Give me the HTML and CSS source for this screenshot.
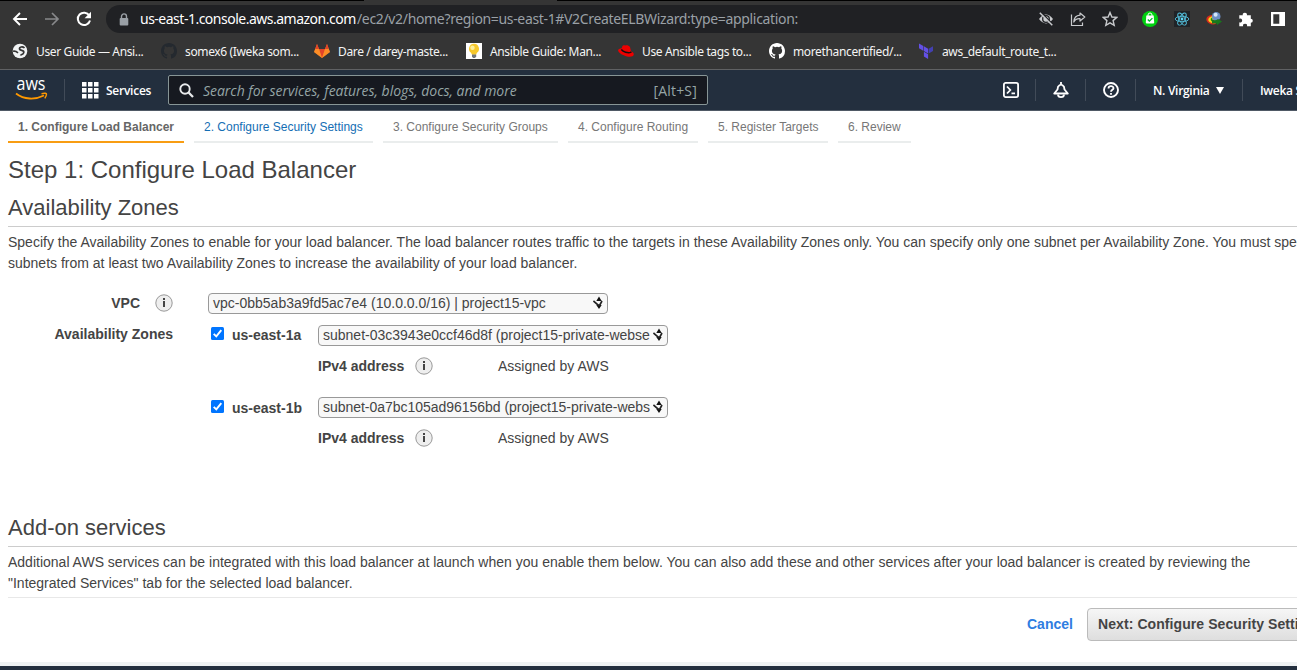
FILE: index.html
```
<!DOCTYPE html>
<html lang="en">
<head>
<meta charset="utf-8">
<title>Create Load Balancer</title>
<link rel="stylesheet" href="styles.css">
</head>
<body>
<div class="window">
  <header class="browser">
    <div class="tabstrip"><span class="active-tab"></span></div>
    <div class="toolbar">
      <svg class="ic nav-back" width="16" height="16" viewBox="0 0 16 16"><path d="M15 8H2M8 2L2 8l6 6" fill="none" stroke="#fff" stroke-width="1.9"/></svg>
      <svg class="ic nav-fwd" width="16" height="16" viewBox="0 0 16 16"><path d="M1 8h13M8 2l6 6-6 6" fill="none" stroke="#88898b" stroke-width="1.7"/></svg>
      <svg class="ic nav-reload" width="16" height="16" viewBox="0 0 16 16"><path d="M13.3 4.6A6.2 6.2 0 1 0 14 9.5" fill="none" stroke="#fff" stroke-width="2"/><path d="M15 .8v6.4H8.6z" fill="#fff"/></svg>
      <div class="omnibox">
        <svg class="lock" width="10" height="13" viewBox="0 0 10 13"><path d="M2.5 6V3.400a2.500 2.500 0 0 1 5 0V6" fill="none" stroke="#9aa0a6" stroke-width="1.4"/><rect x=".7" y="5" width="8.6" height="7.6" rx="1" fill="#9aa0a6"/></svg>
        <span class="url"><b>us-east-1.console.aws.amazon.com</b><i>/ec2/v2/home?region=us-east-1#V2CreateELBWizard:type=application:</i></span>
        <svg class="oi" width="16" height="16" viewBox="0 0 16 16"><path d="M1 8Q8-.8 15 8 8 16.800 1 8z" fill="#c8cacd"/><circle cx="8" cy="8" r="3.3" fill="none" stroke="#202124" stroke-width="1.3"/><path d="M3 1l12 12.800" stroke="#202124" stroke-width="1.600"/><path d="M1.800 1.800l12.500 12.500" stroke="#c8cacd" stroke-width="1.500"/></svg>
        <svg class="oi" width="16" height="16" viewBox="0 0 16 16"><path d="M1.500 3.500v11h11v-3" fill="none" stroke="#c8cacd" stroke-width="1.200"/><path d="M10 2l4.800 4-4.800 4V7.700C7 7.500 5 8.500 3.800 11 4 7 6 4.500 10 4.200z" fill="none" stroke="#c8cacd" stroke-width="1.200" stroke-linejoin="round"/></svg>
        <svg class="oi" width="16" height="16" viewBox="0 0 16 16"><path d="M8 1.500l1.900 4.500 4.900.4-3.700 3.200 1.100 4.800L8 11.900l-4.200 2.500 1.100-4.800L1.200 6.400 6.100 6z" fill="none" stroke="#c8cacd" stroke-width="1.400"/></svg>
      </div>
      <div class="extensions">
        <svg width="16" height="16" viewBox="0 0 16 16"><circle cx="8" cy="8" r="8" fill="#00d010"/><path d="M6 5V4a2 2 0 0 1 4 0v1" fill="none" stroke="#fff"/><path d="M4.300 4.500h7.400l.5 7a1 1 0 0 1-1 1H4.800a1 1 0 0 1-1-1z" fill="#fff"/><path d="M5.800 8.500l1.600 1.600 3-3" fill="none" stroke="#00b82b" stroke-width="1.300"/></svg>
        <svg width="16" height="16" viewBox="0 0 16 16"><rect width="16" height="16" fill="#202327"/><g fill="none" stroke="#53c1de" stroke-width=".9"><ellipse cx="8" cy="8" rx="6.800" ry="2.700"/><ellipse cx="8" cy="8" rx="6.800" ry="2.700" transform="rotate(60 8 8)"/><ellipse cx="8" cy="8" rx="6.800" ry="2.700" transform="rotate(120 8 8)"/></g><circle cx="8" cy="8" r="1.400" fill="#61dafb"/></svg>
        <svg width="16" height="16" viewBox="0 0 16 16"><path d="M6 4C1 4.500-.5 7.500.8 10c1.500 3 5.500 4 9.200 3z" fill="#d92b1c"/><path d="M7 5C3.500 5.500 1.700 7.500 2.500 9.800 3.500 12 7 12.800 10 12z" fill="#f5d51b"/><path d="M6.500 6.500C4.500 7 4 9 6 10.500z" fill="#18851c"/><circle cx="10.200" cy="5.400" r="4.300" fill="#6c8fc5"/><circle cx="9.600" cy="3.800" r="2" fill="#d5e6fa"/><path d="M6 8.500c3 1.500 5 .5 6-.5l4 2.500-5 3.500-.5-1.800-4.500.3z" fill="#18781c"/></svg>
        <svg width="16" height="16" viewBox="0 0 16 16"><path d="M1.300 4.200h3.500a2.100 2.100 0 1 1 4.100 0h3.900v3.500a2 2 0 1 1 0 4v3.500H9a2 2 0 1 0-3.900 0H1.300v-3.900a2 2 0 1 0 0-3.600z" fill="#fff"/></svg>
        <svg width="16" height="16" viewBox="0 0 16 16"><path d="M1 1h14v14H1zM3.300 3.300v9.400h6V3.300z" fill="#fff" fill-rule="evenodd"/></svg>
      </div>
    </div>
    <nav class="bookmarks">
      <a class="bm bm1"><svg width="16" height="16" viewBox="0 0 16 16"><circle cx="8" cy="8" r="7.300" fill="#f1f3f4"/><path d="M12.500 5C10.500 3 7.200 4 7.500 6s4.700.8 4.300 3.300-2.700 1.900-3.300 3.200M1 8.300c2-.5 3.500.2 5 1.500" fill="none" stroke="#353535" stroke-width="1.700"/></svg><span>User Guide — Ansi...</span></a>
      <a class="bm bm2"><svg width="16" height="16" viewBox="0 0 16 16"><path class="gh-dark" d="M8 0C3.580 0 0 3.580 0 8c0 3.540 2.290 6.530 5.470 7.590.4.070.55-.17.55-.38 0-.19-.01-.82-.01-1.490-2.010.37-2.530-.49-2.690-.94-.09-.23-.48-.94-.82-1.130-.28-.15-.68-.52-.01-.53.63-.01 1.080.58 1.230.82.72 1.210 1.870.87 2.330.66.070-.52.28-.87.51-1.070-1.780-.2-3.640-.89-3.640-3.950 0-.87.31-1.590.82-2.150-.08-.2-.36-1.020.08-2.120 0 0 .67-.21 2.200.82a7.600 7.600 0 0 1 4 0c1.530-1.040 2.200-.82 2.200-.82.44 1.100.16 1.920.08 2.120.51.56.82 1.270.82 2.150 0 3.070-1.870 3.750-3.650 3.950.29.25.54.73.54 1.480 0 1.070-.01 1.930-.01 2.200 0 .21.15.46.55.38A8 8 0 0 0 16 8c0-4.420-3.580-8-8-8z"/></svg><span>somex6 (Iweka som...</span></a>
      <a class="bm bm3"><svg width="16" height="16" viewBox="0 0 16 16"><path d="M0 9l1.500-4L3 1l2 5h6l2-5 1.500 4L16 9l-8 6z" fill="#fc6d26"/><path d="M5 6h6l-3 9z" fill="#e24329"/><path d="M0 9l1.300-3H5l3 9zM16 9l-1.300-3H11l-3 9z" fill="#fca326" opacity=".6"/><path d="M1.300 6L3 1l2 5zM14.700 6L13 1l-2 5z" fill="#e24329"/></svg><span>Dare / darey-maste...</span></a>
      <a class="bm bm4"><svg width="16" height="16" viewBox="0 0 16 16"><rect width="16" height="16" fill="#fff"/><path d="M8 .8a5 5 0 0 0-3 9l1 2h4l1-2a5 5 0 0 0-3-9z" fill="#f7c92c"/><circle cx="6.500" cy="4.800" r="2.200" fill="#fff09a"/><path d="M6 11.500h4.200v2L9 15H7l-1-1.500z" fill="#71777c"/></svg><span>Ansible Guide: Man...</span></a>
      <a class="bm bm5"><svg width="16" height="16" viewBox="0 0 16 16"><path d="M.3 6.800c1-1.100 2-1.200 3.200-1.200L4.500 3c.5-1 1.500-1 2.800-.5C9 2 11 2.600 12 4l1 4.200c2 .9 3 2.100 2.700 3.600-.5 2-3.700 2.400-6.700 1.600C4.500 12.200-.8 9.200.3 6.800z" fill="#e00"/><path d="M3.300 6.600c2 2.400 6.500 3.600 9.400 2.800l.5-.7" fill="none" stroke="#111" stroke-width="1.500"/></svg><span>Use Ansible tags to...</span></a>
      <a class="bm bm6"><svg width="16" height="16" viewBox="0 0 16 16"><path class="gh-light" d="M8 0C3.580 0 0 3.580 0 8c0 3.540 2.290 6.530 5.470 7.590.4.070.55-.17.55-.38 0-.19-.01-.82-.01-1.490-2.010.37-2.530-.49-2.690-.94-.09-.23-.48-.94-.82-1.130-.28-.15-.68-.52-.01-.53.63-.01 1.080.58 1.230.82.72 1.210 1.870.87 2.330.66.070-.52.28-.87.51-1.070-1.780-.2-3.640-.89-3.640-3.950 0-.87.31-1.590.82-2.150-.08-.2-.36-1.020.08-2.120 0 0 .67-.21 2.200.82a7.600 7.600 0 0 1 4 0c1.530-1.040 2.200-.82 2.200-.82.44 1.100.16 1.920.08 2.120.51.56.82 1.270.82 2.150 0 3.070-1.870 3.750-3.650 3.950.29.25.54.73.54 1.480 0 1.070-.01 1.930-.01 2.200 0 .21.15.46.55.38A8 8 0 0 0 16 8c0-4.420-3.580-8-8-8z"/></svg><span>morethancertified/...</span></a>
      <a class="bm bm7"><svg width="16" height="16" viewBox="0 0 16 16"><path d="M1 .5l4.300 2.400v4.800L1 5.300zM5.900 3.300l4.200 2.400v4.800L5.900 8.100zM5.900 8.800l4.200 2.400V16l-4.200-2.400z" fill="#6350e6"/><path d="M10.700 5.700L15 3.300v4.800l-4.300 2.400z" fill="#4340b2"/></svg><span>aws_default_route_t...</span></a>
    </nav>
  </header>

  <div class="awsnav">
    <svg class="aws-logo" width="32" height="24" viewBox="0 0 32 24"><text x="0.500" y="12" textLength="29" lengthAdjust="spacingAndGlyphs">aws</text><path d="M0 15.500c8 6.200 19 6.500 28 2" fill="none" stroke="#f90" stroke-width="1.800"/><path d="M25.500 15.700c3.500-.8 5-.3 5 .2 0 1.200-.7 3-1.700 4.500" fill="none" stroke="#f90" stroke-width="1.400"/></svg>
    <span class="divider"></span>
    <svg class="grid-icon" width="17" height="17" viewBox="0 0 17 17"><path d="M0 0h4.500v4.500H0zM6 0h4.500v4.500H6zM12 0h4.500v4.500H12zM0 6h4.500v4.500H0zM6 6h4.500v4.500H6zM12 6h4.500v4.500H12zM0 12h4.500v4.500H0zM6 12h4.500v4.500H6zM12 12h4.500v4.500H12z" fill="#fff"/></svg>
    <span class="services">Services</span>
    <div class="search">
      <svg width="15" height="15" viewBox="0 0 15 15"><circle cx="6" cy="6" r="4.700" fill="none" stroke="#e8eaec" stroke-width="1.900"/><path d="M9.300 9.300l4.700 4.700" stroke="#e8eaec" stroke-width="2.300"/></svg>
      <span class="placeholder">Search for services, features, blogs, docs, and more</span>
      <span class="shortcut">[Alt+S]</span>
    </div>
    <div class="nav-right">
      <svg width="16" height="16" viewBox="0 0 16 16"><g fill="none" stroke="#fff" stroke-width="1.800"><rect x=".9" y=".9" width="14.200" height="14.200" rx="1.800"/><path d="M4 4.500L7.300 8 4 11.500M8.500 11.300H12"/></g></svg>
      <span class="divider"></span>
      <svg width="16" height="16" viewBox="0 0 16 16"><path d="M8 0v2M5 12.500a3 2.600 0 0 0 6 0" fill="none" stroke="#fff" stroke-width="1.800"/><path d="M1.200 11.500L4.500 7.500 5 4.800Q8 .5 11 4.800l.5 2.700 3.300 4z" fill="none" stroke="#fff" stroke-width="1.800" stroke-linejoin="round"/></svg>
      <span class="divider"></span>
      <svg width="16" height="16" viewBox="0 0 16 16"><circle cx="8" cy="8" r="7" fill="none" stroke="#fff" stroke-width="1.900"/><path d="M5.500 6.400C5.500 3.300 10.500 3.400 10.500 6.200 10.500 7.800 8 7.800 8 9.800M8 10.900v1.800" fill="none" stroke="#fff" stroke-width="1.800"/></svg>
      <span class="divider"></span>
      <span class="region">N. Virginia</span>
      <svg class="caret" width="8" height="7" viewBox="0 0 8 7"><path d="M0 0h8L4 7z" fill="#fff"/></svg>
      <span class="divider"></span>
      <span class="account">Iweka Somto</span>
    </div>
  </div>

  <ol class="steps">
    <li class="step s1 current">1. Configure Load Balancer</li>
    <li class="step s2 link">2. Configure Security Settings</li>
    <li class="step s3">3. Configure Security Groups</li>
    <li class="step s4">4. Configure Routing</li>
    <li class="step s5">5. Register Targets</li>
    <li class="step s6">6. Review</li>
  </ol>

  <main class="content">
    <h1>Step 1: Configure Load Balancer</h1>
    <h2>Availability Zones</h2>
    <p class="copy">Specify the Availability Zones to enable for your load balancer. The load balancer routes traffic to the targets in these Availability Zones only. You can specify only one subnet per Availability Zone. You must specify<br>subnets from at least two Availability Zones to increase the availability of your load balancer.</p>
    <div class="form">
      <div class="row vpc-row">
        <span class="label vpc">VPC</span><span class="info"><svg width="18" height="18" viewBox="0 0 18 18"><circle cx="9" cy="9" r="8.200" fill="#eee" stroke="#999"/><path d="M8 4h2v2H8zM8 7h2v6H8z" fill="#444"/></svg></span>
        <div class="select wide"><span class="sv">vpc-0bb5ab3a9fd5ac7e4 (10.0.0.0/16) | project15-vpc</span><svg class="arrows" width="10" height="14" viewBox="0 0 10 14"><path d="M6 .5L8.700 5H3.300zM6 13L3.300 9h5.400z" fill="#111"/><path d="M.4 5l4.800 4.200h1.500L9 5" fill="none" stroke="#222" stroke-width="1.700"/></svg></div>
      </div>
      <div class="row zone-row first">
        <span class="label az">Availability Zones</span>
        <span class="check"><svg width="13" height="13" viewBox="0 0 13 13"><rect width="13" height="13" rx="1.500" fill="#0075ff"/><path d="M2.700 6.800l2.600 2.600 5-6.300" fill="none" stroke="#fff" stroke-width="1.900"/></svg></span>
        <span class="zone">us-east-1a</span>
        <div class="select"><span class="sv">subnet-03c3943e0ccf46d8f (project15-private-webse</span><svg class="arrows" width="10" height="14" viewBox="0 0 10 14"><path d="M6 .5L8.700 5H3.300zM6 13L3.300 9h5.400z" fill="#111"/><path d="M.4 5l4.800 4.200h1.500L9 5" fill="none" stroke="#222" stroke-width="1.700"/></svg></div>
      </div>
      <div class="row ip-row">
        <span class="ip">IPv4 address</span><span class="info"><svg width="18" height="18" viewBox="0 0 18 18"><circle cx="9" cy="9" r="8.200" fill="#eee" stroke="#999"/><path d="M8 4h2v2H8zM8 7h2v6H8z" fill="#444"/></svg></span><span class="assigned">Assigned by AWS</span>
      </div>
      <div class="row zone-row second">
        <span class="label az"></span>
        <span class="check"><svg width="13" height="13" viewBox="0 0 13 13"><rect width="13" height="13" rx="1.500" fill="#0075ff"/><path d="M2.700 6.800l2.600 2.600 5-6.300" fill="none" stroke="#fff" stroke-width="1.900"/></svg></span>
        <span class="zone">us-east-1b</span>
        <div class="select"><span class="sv tight">subnet-0a7bc105ad96156bd (project15-private-webs</span><svg class="arrows" width="10" height="14" viewBox="0 0 10 14"><path d="M6 .5L8.700 5H3.300zM6 13L3.300 9h5.400z" fill="#111"/><path d="M.4 5l4.800 4.200h1.500L9 5" fill="none" stroke="#222" stroke-width="1.700"/></svg></div>
      </div>
      <div class="row ip-row">
        <span class="ip">IPv4 address</span><span class="info"><svg width="18" height="18" viewBox="0 0 18 18"><circle cx="9" cy="9" r="8.200" fill="#eee" stroke="#999"/><path d="M8 4h2v2H8zM8 7h2v6H8z" fill="#444"/></svg></span><span class="assigned">Assigned by AWS</span>
      </div>
    </div>
    <h2 class="addon">Add-on services</h2>
    <p class="copy">Additional AWS services can be integrated with this load balancer at launch when you enable them below. You can also add these and other services after your load balancer is created by reviewing the<br>"Integrated Services" tab for the selected load balancer.</p>
  </main>
  <div class="actions"><a class="cancel">Cancel</a><button class="next">Next: Configure Security Settings</button></div>
  <footer class="footer"></footer>
</div>
</body>
</html>
```
FILE: styles.css
```
* { box-sizing: border-box; }
html, body { margin: 0; width: 1297px; height: 670px; overflow: hidden; background: #fff; }
body { font: 14px/21px "Liberation Sans", Arial, sans-serif; color: #444; }
svg { display: block; flex: none; }
.window { width: 1297px; height: 670px; overflow: hidden; display: flex; flex-direction: column; white-space: nowrap; }
.window > * { flex: none; }

/* Browser chrome */
.browser { height: 70px; background: #353535; border-bottom: 1px solid #606163; font-family: "Noto Sans", "Open Sans", sans-serif; }
.tabstrip { height: 1px; background: #000; padding-left: 364px; }
.active-tab { display: block; width: 193px; height: 1px; background: #353535; }
.toolbar { height: 36px; display: flex; align-items: center; }
.nav-back { margin-left: 12px; }
.nav-fwd { margin-left: 16px; }
.nav-reload { margin-left: 16px; }
.omnibox { width: 1022px; height: 28px; margin: 0 0 0 14px; padding: 0 10px 0 13px; border-radius: 14px; background: #202124; display: flex; align-items: center; }
.url { font-size: 14px; line-height: 20px; margin-left: 11px; flex: 1; display: flex; }
.url b { font-weight: 400; color: #fff; width: 217px; letter-spacing: -.5px; }
.url i { font-style: normal; color: #9aa0a6; letter-spacing: -.34px; }
.oi { margin-left: 16px; }
.extensions { display: flex; gap: 16px; margin-left: 14px; }
.bookmarks { height: 28px; display: flex; align-items: center; padding-left: 12px; font-size: 12px; letter-spacing: -.36px; color: #f4f4f4; }
.bm { display: flex; align-items: center; gap: 8px; flex: none; }
.bm1 { width: 149px; }
.bm2 { width: 153px; }
.bm3 { width: 152px; }
.bm4 { width: 152px; }
.bm5 { width: 151px; }
.bm6 { width: 149px; }
.gh-dark { fill: #24292f; }
.gh-light { fill: #fff; }

/* Console navigation */
.awsnav { height: 41px; background: #232f3e; border-bottom: 1px solid #4f5965; display: flex; align-items: center; padding-left: 16px; font-family: "Open Sans", "Noto Sans", sans-serif; color: #fff; overflow: hidden; }
.awsnav > *, .nav-right > * { flex: none; }
.aws-logo { overflow: visible; }
.aws-logo text { font: 500 18px/1 "Open Sans", sans-serif; fill: #fff; }
.divider { width: 1px; height: 22px; background: #414b58; }
.aws-logo + .divider { margin-left: 16px; }
.grid-icon { margin-left: 17px; }
.services { width: 62px; margin-left: 7px; font-size: 12px; font-weight: 600; letter-spacing: -.25px; }
.search { width: 540px; height: 30px; border: 1px solid #879596; border-radius: 2px; background: #161920; display: flex; align-items: center; padding: 0 10px; color: #95a5a6; font-size: 14px; }
.placeholder { margin-left: 9px; flex: 1; font-style: italic; letter-spacing: -.03px; }
.shortcut { letter-spacing: .2px; }
.nav-right { margin-left: 295px; display: flex; align-items: center; font-size: 12px; font-weight: 600; letter-spacing: -.3px; }
.nav-right .divider { margin: 0 17px 0 16px; }
.region { width: 58px; }
.caret { margin-left: 5px; }
.nav-right .caret + .divider { margin: 0 17px 0 18px; }

/* Wizard steps */
.steps { list-style: none; margin: 0; padding: 0 0 0 8px; height: 32px; display: flex; gap: 10px; font-size: 12px; color: #777; }
.step { height: 32px; padding-left: 10px; line-height: 32px; border-bottom: 2px solid #eaeded; }
.s1 { width: 176px; }
.s2 { width: 179px; }
.s3 { width: 175px; }
.s4 { width: 130px; }
.s5 { width: 120px; }
.s6 { width: 73px; }
.current { font-weight: 700; color: #666; border-color: #f89d13; }
.link { color: #146eb4; }

/* Page body */
.content { height: 455px; padding-left: 8px; overflow: hidden; }
h1 { margin: 11px 0 0; font-size: 24px; line-height: 32px; font-weight: 400; }
h2 { margin: 7px 0 0; height: 34px; font-size: 22px; line-height: 30px; font-weight: 400; border-bottom: 1px solid #ccc; }
.copy { margin: 5px 0 0; font-size: 14px; line-height: 21px; }
.form { height: 239px; padding-top: 18px; }
.row { display: flex; align-items: center; }
.row > * { flex: none; }
.vpc-row { height: 22px; }
.label { font-weight: 700; }
.vpc { width: 132px; text-align: right; }
.vpc-row .info { margin-left: 15px; }
.wide { margin-left: 35px; }
.select { width: 350px; height: 21px; padding-left: 4px; border: 1px solid #999; border-radius: 4px; background: #f8f8f8; display: flex; align-items: center; }
.select.wide { width: 400px; }
.sv { flex: 1; line-height: 19px; }
.tight { letter-spacing: -.03px; }
.arrows { margin: -1px 4px 0 0; }
.zone-row { height: 22px; margin-top: 10px; }
.az { width: 165px; text-align: right; padding-bottom: 2px; }
.check { margin: -3px 0 0 38px; }
.zone { width: 86px; margin-left: 8px; font-weight: 700; }
.ip-row { height: 21px; margin-top: 10px; padding-left: 310px; }
.ip { width: 97px; font-weight: 700; }
.ip-row .info { padding-bottom: 2px; }
.assigned { margin-left: 65px; }
.second { margin-top: 20px; }
.second .select { margin-top: -1px; }
.second + .ip-row { margin-top: 9px; }
h2.addon { margin-top: 0; }
.actions { height: 65px; border-top: 1px solid #e8e8e8; padding: 10px 0 0 1019px; display: flex; align-items: flex-start; overflow: hidden; margin-left: 8px; margin-top: -1px; }
.cancel { width: 60px; flex: none; line-height: 32px; color: #2e7de1; font-weight: 700; }
.next { width: 260px; flex: none; height: 33px; padding: 0 0 2px 10px; text-align: left; font: 700 14px "Liberation Sans", Arial, sans-serif; letter-spacing: .08px; color: #444; border: 1px solid #bbb; border-radius: 4px; background: linear-gradient(#f6f6f6, #dedede); }
.footer { height: 8px; border-top: 4px solid #eff2f3; background: #232f3e; }
```
